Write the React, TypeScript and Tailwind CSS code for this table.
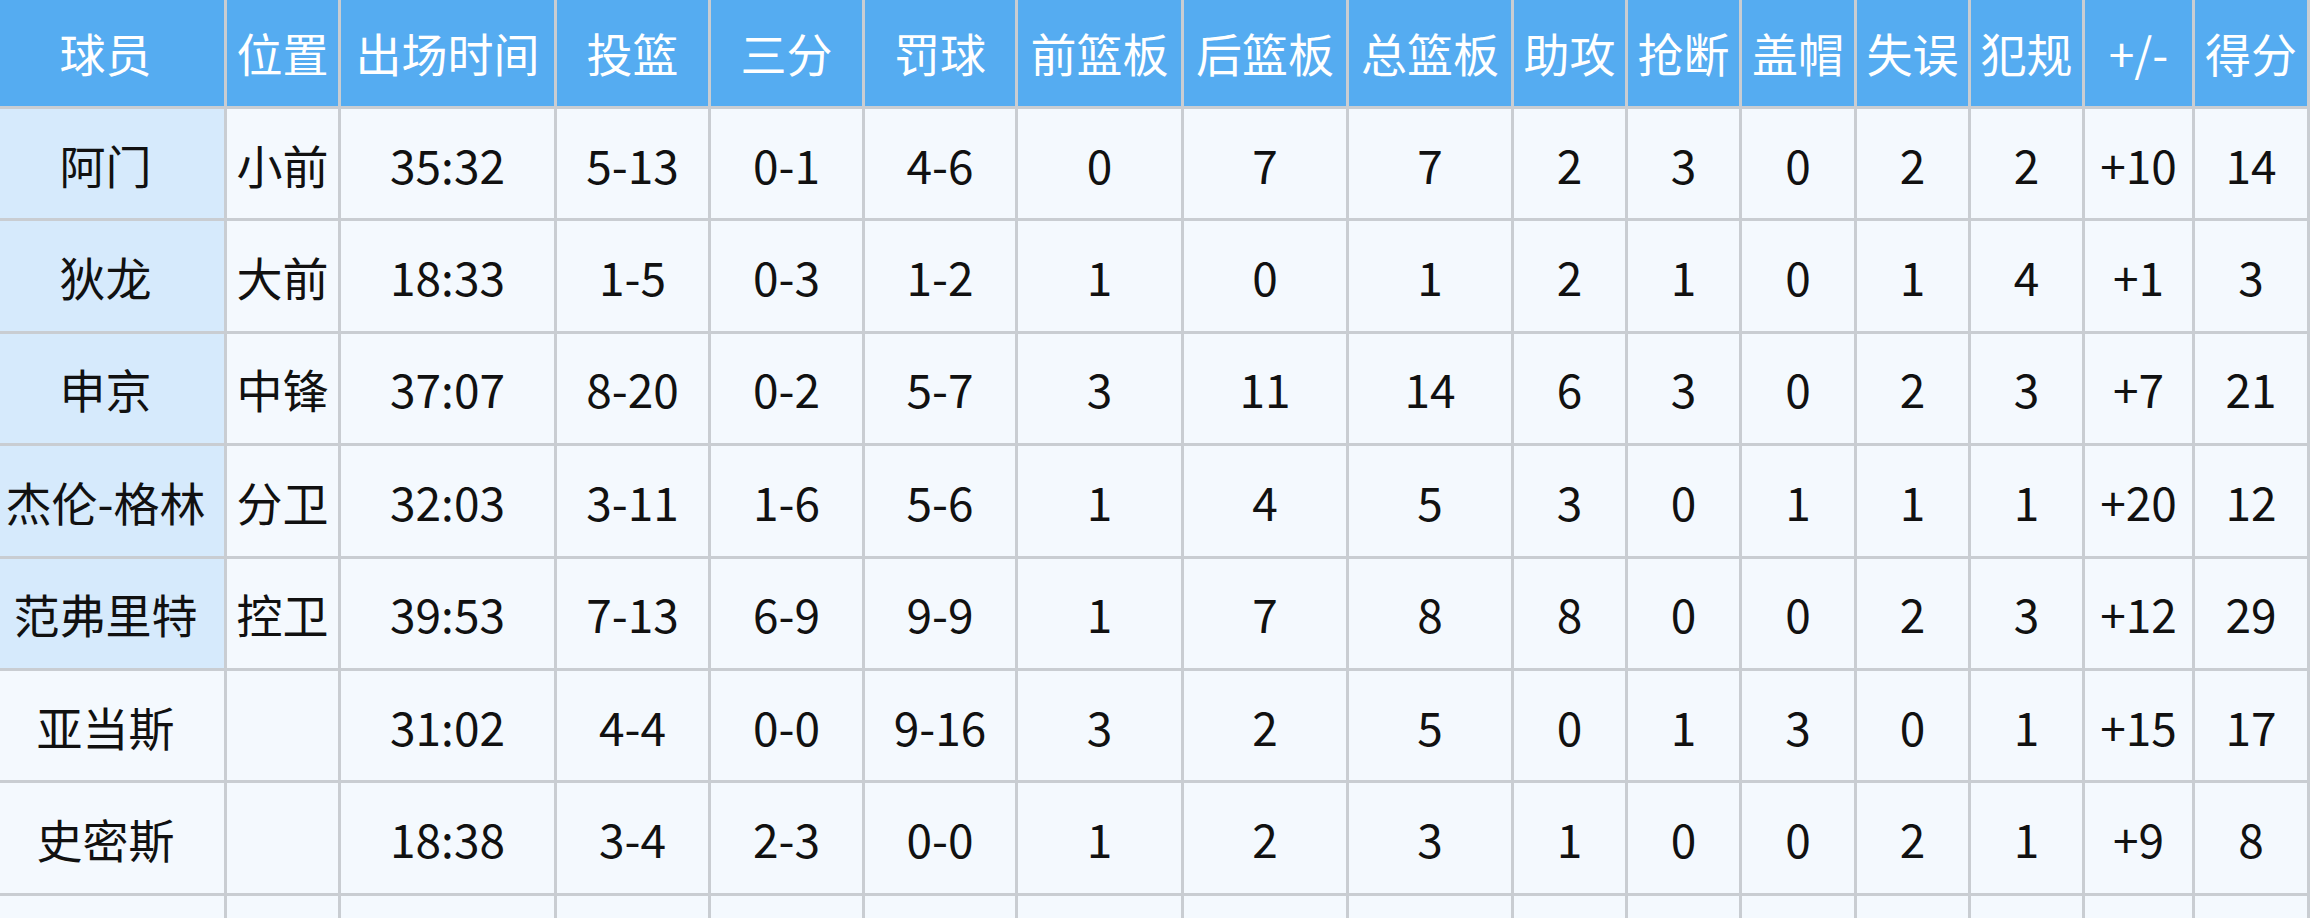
import React from 'react';

type Row = {
  name: string;
  pos: string;
  starter: boolean;
  stats: string[];
};

const headers = [
  '球员',
  '位置',
  '出场时间',
  '投篮',
  '三分',
  '罚球',
  '前篮板',
  '后篮板',
  '总篮板',
  '助攻',
  '抢断',
  '盖帽',
  '失误',
  '犯规',
  '+/-',
  '得分',
];

const rows: Row[] = [
  { name: '阿门', pos: '小前', starter: true, stats: ['35:32', '5-13', '0-1', '4-6', '0', '7', '7', '2', '3', '0', '2', '2', '+10', '14'] },
  { name: '狄龙', pos: '大前', starter: true, stats: ['18:33', '1-5', '0-3', '1-2', '1', '0', '1', '2', '1', '0', '1', '4', '+1', '3'] },
  { name: '申京', pos: '中锋', starter: true, stats: ['37:07', '8-20', '0-2', '5-7', '3', '11', '14', '6', '3', '0', '2', '3', '+7', '21'] },
  { name: '杰伦-格林', pos: '分卫', starter: true, stats: ['32:03', '3-11', '1-6', '5-6', '1', '4', '5', '3', '0', '1', '1', '1', '+20', '12'] },
  { name: '范弗里特', pos: '控卫', starter: true, stats: ['39:53', '7-13', '6-9', '9-9', '1', '7', '8', '8', '0', '0', '2', '3', '+12', '29'] },
  { name: '亚当斯', pos: '', starter: false, stats: ['31:02', '4-4', '0-0', '9-16', '3', '2', '5', '0', '1', '3', '0', '1', '+15', '17'] },
  { name: '史密斯', pos: '', starter: false, stats: ['18:38', '3-4', '2-3', '0-0', '1', '2', '3', '1', '0', '0', '2', '1', '+9', '8'] },
  { name: '', pos: '', starter: false, stats: ['', '', '', '', '', '', '', '', '', '', '', '', '', ''] },
];

const gridCols =
  'grid grid-cols-[240px_114px_216px_154px_154px_153px_166px_165px_165px_114px_114px_115px_114px_114px_110px_115px]';

export default function App() {
  return (
    <div className="w-[2316px] h-[918px] overflow-hidden bg-white font-['Noto_Sans_CJK_SC','Microsoft_YaHei',sans-serif] text-[46px] leading-none">
      {/* table is cropped at the top-left edge in the screenshot */}
      <div className="-mt-[8px] -ml-[13px] w-[2323px]">
        {/* Header */}
        <div className={gridCols}>
          {headers.map((h) => (
            <div
              key={h}
              className="h-[117px] flex items-center justify-center pt-[6px] bg-[#55acf1] text-white border-r-[3px] border-b-[3px] border-[#c9cdd2] whitespace-nowrap"
            >
              {h}
            </div>
          ))}
        </div>

        {/* Body */}
        {rows.map((r, i) => (
          <div key={i} className={gridCols}>
            <div
              className={
                'h-[112.4px] flex items-center justify-center border-r-[3px] border-b-[3px] border-[#c9cdd2] text-[#111] whitespace-nowrap ' +
                (r.starter ? 'bg-[#d6eafc]' : 'bg-[#f4f9fe]')
              }
            >
              {r.name}
            </div>
            <div className="h-[112.4px] flex items-center justify-center bg-[#f4f9fe] border-r-[3px] border-b-[3px] border-[#c9cdd2] text-[#111] whitespace-nowrap">
              {r.pos}
            </div>
            {r.stats.map((s, j) => (
              <div
                key={j}
                className="h-[112.4px] flex items-center justify-center bg-[#f4f9fe] border-r-[3px] border-b-[3px] border-[#c9cdd2] text-[#111] whitespace-nowrap"
              >
                {s}
              </div>
            ))}
          </div>
        ))}
      </div>
    </div>
  );
}
